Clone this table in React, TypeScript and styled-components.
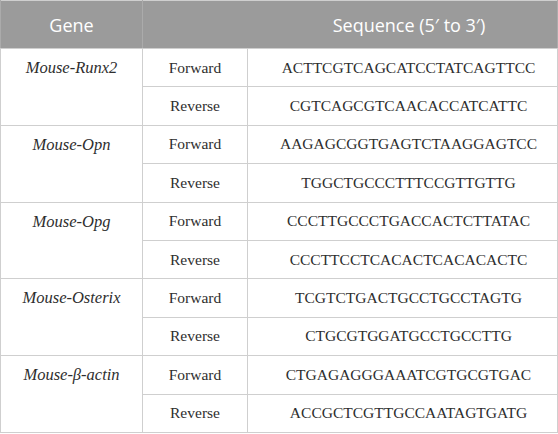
import React from "react";
import styled, { createGlobalStyle } from "styled-components";

const Global = createGlobalStyle`
  html, body {
    margin: 0;
    padding: 0;
    background: #ffffff;
    font-family: "Liberation Serif", "Times New Roman", serif;
  }
`;

const Table = styled.table`
  width: 558px;
  border-collapse: collapse;
  table-layout: fixed;
  border: 1px solid #cfcfcf;
  font-family: "Liberation Serif", "Times New Roman", serif;
  color: #2e2e2e;
`;

const HeadRow = styled.tr`
  background: #9b9b9b;
`;

const HeadCell = styled.th<{ $pad?: number }>`
  height: 47px;
  padding: 0 0 0 ${(p) => p.$pad ?? 0}px;
  color: #ffffff;
  font-family: "Open Sans", "Noto Sans", sans-serif;
  font-weight: 400;
  font-size: 18px;
  text-align: center;
  vertical-align: middle;
  border-left: 1px solid #ababab;
  border-right: 1px solid #ababab;
  border-bottom: 1px solid #cfcfcf;
`;

const GeneCell = styled.td`
  padding: 9px 0 0 0;
  font-family: "Liberation Serif", "Times New Roman", serif;
  font-style: italic;
  font-size: 16.5px;
  color: #2e2e2e;
  text-align: center;
  vertical-align: top;
  border: 1px solid #cfcfcf;
`;

const Cell = styled.td<{ $pad?: number }>`
  height: 37.4px;
  padding: 0 0 0 ${(p) => p.$pad ?? 0}px;
  font-family: "Liberation Serif", "Times New Roman", serif;
  font-size: 15.5px;
  color: #2e2e2e;
  text-align: center;
  vertical-align: middle;
  border: 1px solid #cfcfcf;
  white-space: nowrap;
`;

type Gene = { name: string; fwd: string; rev: string };

const genes: Gene[] = [
  { name: "Mouse-Runx2", fwd: "ACTTCGTCAGCATCCTATCAGTTCC", rev: "CGTCAGCGTCAACACCATCATTC" },
  { name: "Mouse-Opn", fwd: "AAGAGCGGTGAGTCTAAGGAGTCC", rev: "TGGCTGCCCTTTCCGTTGTTG" },
  { name: "Mouse-Opg", fwd: "CCCTTGCCCTGACCACTCTTATAC", rev: "CCCTTCCTCACACTCACACACTC" },
  { name: "Mouse-Osterix", fwd: "TCGTCTGACTGCCTGCCTAGTG", rev: "CTGCGTGGATGCCTGCCTTG" },
  { name: "Mouse-\u03b2-actin", fwd: "CTGAGAGGGAAATCGTGCGTGAC", rev: "ACCGCTCGTTGCCAATAGTGATG" },
];

export default function App() {
  return (
    <>
      <Global />
      <Table>
        <colgroup>
          <col width={142} />
          <col width={105} />
          <col />
        </colgroup>
        <thead>
          <HeadRow>
            <HeadCell>Gene</HeadCell>
            <HeadCell colSpan={2} $pad={118}>
              Sequence (5′ to 3′)
            </HeadCell>
          </HeadRow>
        </thead>
        <tbody>
          {genes.map((g) => (
            <React.Fragment key={g.name}>
              <tr>
                <GeneCell rowSpan={2}>{g.name}</GeneCell>
                <Cell>Forward</Cell>
                <Cell $pad={12}>{g.fwd}</Cell>
              </tr>
              <tr>
                <Cell>Reverse</Cell>
                <Cell $pad={12}>{g.rev}</Cell>
              </tr>
            </React.Fragment>
          ))}
        </tbody>
      </Table>
    </>
  );
}
